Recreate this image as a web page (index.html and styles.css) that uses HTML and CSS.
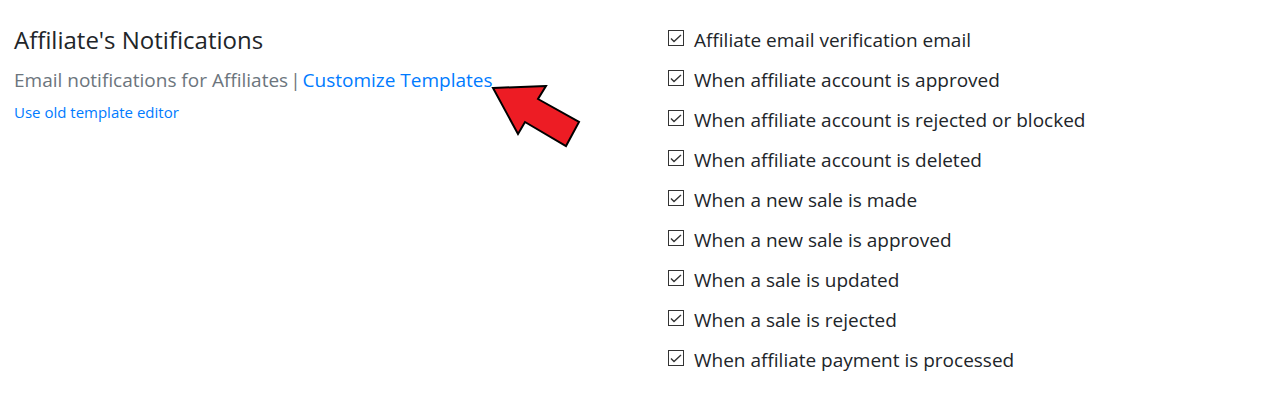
FILE: index.html
```html
<!DOCTYPE html>
<html lang="en">
<head>
<meta charset="utf-8">
<title>Affiliate's Notifications</title>
<link rel="stylesheet" href="styles.css">
</head>
<body>
<main class="settings">
  <section class="intro">
    <h1 class="title">Affiliate's Notifications</h1>
    <p class="lead"><span>Email notifications for Affiliates</span> <span>|</span> <span class="anchor"><a class="link" href="#">Customize Templates</a><svg class="arrow" viewBox="0 0 90 64" width="90" height="64" aria-hidden="true"><path d="M2 3L55 1L47 14L88 37L75 61L34 37L27 49Z"/></svg></span></p>
    <a class="link small" href="#">Use old template editor</a>
  </section>
  <form class="options">
    <label class="option"><input class="box" type="checkbox" checked><span>Affiliate email verification email</span></label>
    <label class="option"><input class="box" type="checkbox" checked><span>When affiliate account is approved</span></label>
    <label class="option"><input class="box" type="checkbox" checked><span>When affiliate account is rejected or blocked</span></label>
    <label class="option"><input class="box" type="checkbox" checked><span>When affiliate account is deleted</span></label>
    <label class="option"><input class="box" type="checkbox" checked><span>When a new sale is made</span></label>
    <label class="option"><input class="box" type="checkbox" checked><span>When a new sale is approved</span></label>
    <label class="option"><input class="box" type="checkbox" checked><span>When a sale is updated</span></label>
    <label class="option"><input class="box" type="checkbox" checked><span>When a sale is rejected</span></label>
    <label class="option"><input class="box" type="checkbox" checked><span>When affiliate payment is processed</span></label>
  </form>
</main>
</body>
</html>
```
FILE: styles.css
```css
* { box-sizing: border-box; }
body {
  margin: 0;
  background: #fff;
  color: #212529;
  font-family: "Segoe UI", "Open Sans", "Noto Sans", sans-serif;
}
.settings {
  display: grid;
  grid-template-columns: 1fr 1fr;
  gap: 44px;
  padding: 20px 10px 20px 14px;
}
.intro { white-space: nowrap; }
.title {
  margin: 0;
  font-size: 24px;
  font-weight: 400;
  line-height: 40px;
}
.lead {
  display: flex;
  gap: 2px;
  margin: 0;
  color: #6c757d;
  font-size: 19px;
  line-height: 40px;
}
.anchor { position: relative; }
.link { color: #007bff; text-decoration: none; }
.small {
  display: inline-block;
  font-size: 15px;
  line-height: 24px;
}
.arrow {
  position: absolute;
  left: calc(100% - 2px);
  top: 25px;
  fill: #ed1c24;
  stroke: #000;
  stroke-width: 2;
}
.option {
  display: flex;
  align-items: center;
  gap: 10px;
  height: 40px;
  font-size: 19px;
}
.box {
  appearance: none;
  flex: none;
  width: 16px;
  height: 16px;
  margin: 0 0 4px;
  border: 1px solid #333;
  background: #fff;
}
.box:checked {
  background: url("data:image/svg+xml,%3Csvg xmlns='http://www.w3.org/2000/svg' viewBox='0 0 14 14'%3E%3Cpath d='M2 7.5l3 3 7-6.500' fill='none' stroke='%23333' stroke-width='1.4'/%3E%3C/svg%3E") center / 14px 14px no-repeat;
}
```
